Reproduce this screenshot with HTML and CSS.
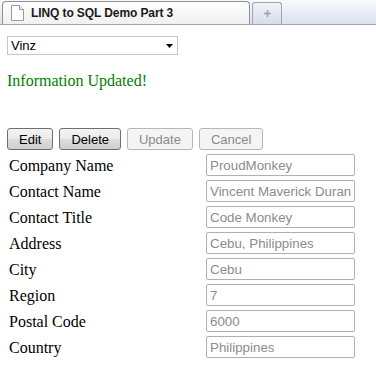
FILE: index.html
```html
<!DOCTYPE html>
<html lang="en">
<head>
  <meta charset="UTF-8">
  <title>LINQ to SQL Demo Part 3</title>
  <link rel="stylesheet" href="styles.css">
</head>
<body>
<div class="tabstrip">
  <div class="tab">
    <svg class="pageIcon" width="13" height="16" viewBox="0 0 13 16">
      <path d="M0.5 0.5 H8.5 L12.5 4.5 V15.5 H0.5 Z" fill="#fff" stroke="#9a9a9a"/>
      <path d="M8.5 0.5 V4.5 H12.5" fill="#eee" stroke="#9a9a9a"/>
    </svg>
    <span class="tabTitle">LINQ to SQL Demo Part 3</span>
  </div>
  <div class="newTab">
    <svg width="9" height="9" viewBox="0 0 9 9">
      <path d="M4.5 1 V8 M1 4.5 H8" stroke="#9aa3ad" stroke-width="1.5"/>
    </svg>
  </div>
</div>

<div class="page">
  <div class="picker">
    <select>
      <option>Vinz</option>
    </select>
    <svg class="arrow" width="7" height="4" viewBox="0 0 7 4"><path d="M0 0 H7 L3.5 4 Z" fill="#000"/></svg>
  </div>

  <p class="status">Information Updated!</p>

  <div class="actions">
    <button>Edit</button>
    <button>Delete</button>
    <button disabled>Update</button>
    <button disabled>Cancel</button>
  </div>

  <div class="fields">
    <label>Company Name</label>
    <input type="text" value="ProudMonkey" readonly>
    <label>Contact Name</label>
    <input type="text" value="Vincent Maverick Duran" readonly>
    <label>Contact Title</label>
    <input type="text" value="Code Monkey" readonly>
    <label>Address</label>
    <input type="text" value="Cebu, Philippines" readonly>
    <label>City</label>
    <input type="text" value="Cebu" readonly>
    <label>Region</label>
    <input type="text" value="7" readonly>
    <label>Postal Code</label>
    <input type="text" value="6000" readonly>
    <label>Country</label>
    <input type="text" value="Philippines" readonly>
  </div>
</div>
</body>
</html>
```

FILE: styles.css
```css
body {
  margin: 0;
  padding: 0;
  background: #fff;
  font-family: "Liberation Serif", "Times New Roman", serif;
  font-size: 16px;
}

.tabstrip {
  display: flex;
  align-items: flex-start;
  height: 24px;
  padding-left: 2px;
  border-bottom: 1px solid #a3a6ab;
  background: linear-gradient(#f9fafc, #dbe2ee);
}

.tab {
  display: flex;
  align-items: center;
  gap: 7px;
  box-sizing: border-box;
  width: 248px;
  height: 23px;
  margin-top: 1px;
  padding-left: 8px;
  border: 1px solid #8e9094;
  border-bottom: 0;
  border-radius: 4px 4px 0 0;
  background: linear-gradient(#fefefe, #f0f0f0);
}

.tabTitle {
  font-family: "Liberation Sans", Arial, sans-serif;
  font-weight: bold;
  font-size: 12px;
  letter-spacing: -0.1px;
  color: #1a1a1a;
}

.newTab {
  display: flex;
  align-items: center;
  justify-content: center;
  box-sizing: border-box;
  width: 30px;
  height: 22px;
  margin: 2px 0 0 2px;
  border: 1px solid #9ea4ad;
  border-bottom: 0;
  border-radius: 3px 3px 0 0;
  background: linear-gradient(#f1f4f8, #d6dde9);
}

.page {
  padding: 11px 7px 0;
}

.picker {
  position: relative;
  width: 171px;
}

.picker select {
  display: block;
  box-sizing: border-box;
  width: 171px;
  height: 19px;
  margin: 0;
  padding: 0 0 0 3px;
  border: 1px solid #c3c6cb;
  background: #fff;
  font-family: "Liberation Sans", Arial, sans-serif;
  font-size: 13px;
  color: #000;
  -webkit-appearance: none;
  appearance: none;
}

.arrow {
  position: absolute;
  left: 159px;
  top: 8px;
}

.status {
  margin: 17px 0 38px;
  line-height: 18px;
  color: #008000;
}

.actions {
  display: flex;
  gap: 6px;
}

.actions button {
  box-sizing: border-box;
  height: 22px;
  margin: 0;
  padding: 0 11px;
  border: 1px solid #707070;
  border-radius: 3px;
  background: linear-gradient(#f3f3f3 0%, #ebebeb 50%, #dddddd 51%, #cfcfcf 100%);
  font-family: "Liberation Sans", Arial, sans-serif;
  font-size: 13px;
  color: #000;
}

.actions button:disabled {
  border-color: #b4b8bb;
  background: #f4f4f4;
  color: #8a8a8a;
}

.fields {
  display: grid;
  grid-template-columns: 199px 149px;
  grid-auto-rows: 22px;
  row-gap: 4px;
  margin-top: 4px;
}

.fields label {
  padding: 2px 0 0 2px;
  line-height: 20px;
  color: #000;
}

.fields input {
  box-sizing: border-box;
  width: 149px;
  height: 22px;
  margin: 0;
  padding: 0 3px;
  border: 1px solid #adb0b5;
  border-radius: 2px;
  font-family: "Liberation Sans", Arial, sans-serif;
  font-size: 13.33px;
  color: #8c8c8c;
  background: #fff;
  outline: none;
}
```
